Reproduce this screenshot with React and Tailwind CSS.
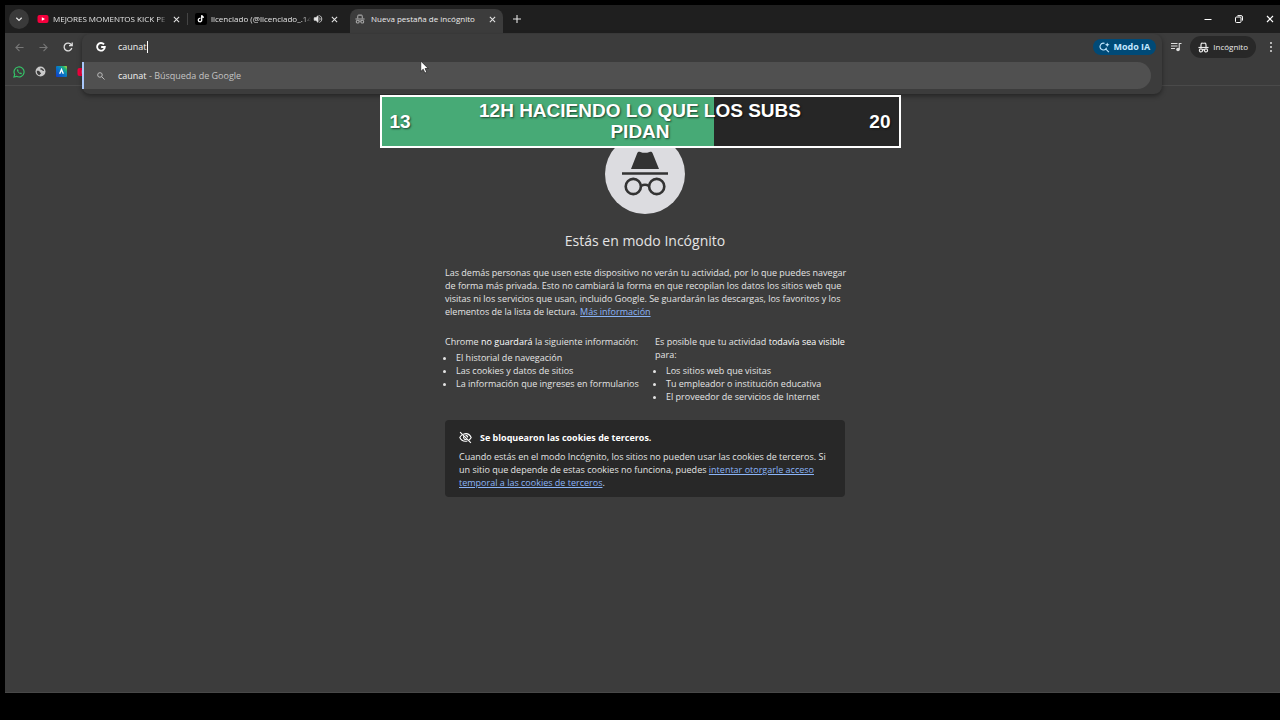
import React, { useState } from "react";

function CloseIcon({ className }) {
  return (
    <svg viewBox="0 0 8 8" className={className} fill="none" stroke="currentColor" strokeWidth="1.2" aria-hidden="true">
      <path d="M1 1l6 6M7 1L1 7" />
    </svg>
  );
}

function IncognitoIcon({ className }) {
  return (
    <svg viewBox="0 0 24 24" className={className} fill="none" stroke="currentColor" strokeWidth="2.6" aria-hidden="true">
      <path d="M6.500 11V6.500C7 2.500 8.500 2 10 2.700h4C15.500 2 17 2.500 17.500 6.500V11" />
      <path d="M1 12h22" />
      <circle cx="6.500" cy="18.300" r="3.400" />
      <circle cx="17.500" cy="18.300" r="3.400" />
      <path d="M9.700 17.500c1.500-1 3.100-1 4.600 0" />
    </svg>
  );
}

function YoutubeIcon({ className }) {
  return (
    <svg viewBox="0 0 12 12" className={className} aria-hidden="true">
      <rect x="0.500" y="2" width="11" height="8" rx="2" fill="#f5003d" />
      <path d="M4.800 4.200L8 6 4.800 7.800z" fill="#fff" />
    </svg>
  );
}

function TiktokIcon({ className }) {
  return (
    <svg viewBox="0 0 12 12" className={className} fill="none" aria-hidden="true">
      <rect width="12" height="12" rx="2" fill="#000" />
      <path d="M5.500 5.400a1.700 1.700 0 1 0 1.200 1.700V2.200c.2 1.300 1 2 2.200 2.100" stroke="#fff" strokeWidth="1.300" />
    </svg>
  );
}

function SpeakerIcon({ className }) {
  return (
    <svg viewBox="0 0 24 24" className={className} fill="none" stroke="currentColor" strokeWidth="2" aria-hidden="true">
      <path d="M3 9v6h4l5 5V4L7 9H3z" fill="currentColor" />
      <path d="M15 8.500c2.500 1.500 2.500 5.500 0 7M15 3.800c8 2 8 14.400 0 16.400" />
    </svg>
  );
}

function MagnifierIcon({ className }) {
  return (
    <svg viewBox="0 0 24 24" className={className} fill="none" stroke="currentColor" strokeWidth="2.200" aria-hidden="true">
      <circle cx="9.500" cy="9.500" r="5.500" />
      <path d="M13.600 13.600L20.500 20.500" />
    </svg>
  );
}

function SparkSearchIcon({ className }) {
  return (
    <svg viewBox="0 0 24 24" className={className} fill="none" stroke="currentColor" strokeWidth="2.400" aria-hidden="true">
      <path d="M12 3A7.300 7.300 0 1 0 16.500 12.500" />
      <path d="M14.500 15L21.500 22" />
      <path d="M18 1l1.400 3.600L23 6l-3.600 1.400L18 11l-1.400-3.600L13 6l3.600-1.400z" fill="currentColor" stroke="none" />
    </svg>
  );
}

function TabTitle({ className, children }) {
  return <span className={"overflow-hidden whitespace-nowrap " + className}>{children}</span>;
}

function TabStrip() {
  return (
    <header className="flex h-7 items-stretch bg-[#1f1f1f] pl-1 text-[8px] text-[#e4e4e4]">
      <button aria-label="Buscar pestañas" className="flex size-5 shrink-0 items-center justify-center self-center rounded-full bg-[#3a3a3a]">
        <svg viewBox="0 0 8 8" className="size-2" fill="none" stroke="currentColor" strokeWidth="1.300" aria-hidden="true">
          <path d="M1.300 2.700L4 5.400l2.700-2.700" />
        </svg>
      </button>
      <nav aria-label="Pestañas" className="flex items-stretch">
        <div className="flex w-[159px] items-center pl-2">
          <YoutubeIcon className="size-3 shrink-0" />
          <TabTitle className="ml-1 w-[114px] [mask-image:linear-gradient(to_right,black_92%,transparent)]">MEJORES MOMENTOS KICK PE</TabTitle>
          <button aria-label="Cerrar pestaña" className="ml-[6px] flex w-2 shrink-0"><CloseIcon className="size-[7px]" /></button>
        </div>
        <div className="flex w-[162px] items-center pl-[7px]">
          <div className="mr-1 -ml-2 h-3 w-px bg-[#444]" />
          <TiktokIcon className="ml-[3px] size-3 shrink-0" />
          <TabTitle className="ml-1 w-[100px] [mask-image:linear-gradient(to_right,black_92%,transparent)]">licenciado (@licenciado_.14</TabTitle>
          <SpeakerIcon className="ml-[2px] size-[10px] shrink-0" />
          <button aria-label="Cerrar pestaña" className="ml-2 flex shrink-0"><CloseIcon className="size-[7px]" /></button>
        </div>
        <div className="mt-1 flex w-[153px] items-center rounded-t-lg bg-[#3c3c3c] pr-[7px] pb-1 pl-[5px]">
          <IncognitoIcon className="size-[10px] shrink-0 text-[#a8a8a8]" />
          <TabTitle className="ml-[6px] flex-1 text-[#ececec]">Nueva pestaña de incógnito</TabTitle>
          <button aria-label="Cerrar pestaña" className="flex shrink-0"><CloseIcon className="size-[7px]" /></button>
        </div>
      </nav>
      <button aria-label="Nueva pestaña" className="ml-[10px] flex items-center">
        <svg viewBox="0 0 8 8" className="size-2" stroke="currentColor" strokeWidth="1.100" aria-hidden="true">
          <path d="M4 0v8M0 4h8" />
        </svg>
      </button>
      <div className="ml-auto flex items-center gap-[23px] pr-[6px] text-white">
        <button aria-label="Minimizar">
          <svg viewBox="0 0 8 8" className="size-2" stroke="currentColor" aria-hidden="true"><path d="M0.500 4.500h7" /></svg>
        </button>
        <button aria-label="Restaurar">
          <svg viewBox="0 0 8 8" className="size-2" fill="none" stroke="currentColor" aria-hidden="true">
            <rect x="0.500" y="2" width="5.500" height="5.500" rx="1" />
            <path d="M2.500 0.600h3.500a1.500 1.500 0 0 1 1.500 1.500v3.500" />
          </svg>
        </button>
        <button aria-label="Cerrar"><CloseIcon className="size-2" /></button>
      </div>
    </header>
  );
}

function Omnibox() {
  const [query, setQuery] = useState("caunat");
  return (
    <div className="relative z-10 ml-2 flex-1">
      <div className="absolute inset-x-0 top-0 rounded-lg bg-[#3c3c3c] pt-7 pr-[11px] pb-[5px] shadow-[0_2px_5px_rgba(0,0,0,0.4)]">
        <button className="flex h-[27px] w-full items-center rounded-r-full border-l-2 border-[#a8c7fa] bg-[#505050] pl-3 text-left text-[#c4c4c4]">
          <MagnifierIcon className="size-[10px]" />
          <span className="ml-3"><span className="text-[#f2f2f2]">{query}</span> - Búsqueda de Google</span>
        </button>
      </div>
      <div className="relative flex h-[26px] items-center pr-[6px] pl-[14px]">
        <svg viewBox="0 0 12 12" className="size-[10px]" fill="none" stroke="#fff" strokeWidth="2.200" aria-hidden="true">
          <path d="M9.600 2.900A4.600 4.600 0 1 0 10.600 6H6.200" />
        </svg>
        <label className="ml-3 flex flex-1 items-center">
          <span className="sr-only">Buscar o escribir URL</span>
          <input value={query} onChange={(e) => setQuery(e.target.value)} className="bg-transparent text-[#f2f2f2] outline-none [field-sizing:content]" />
          <span className="h-3 w-px bg-white" />
        </label>
        <button className="flex h-4 items-center gap-[3px] rounded-full bg-[#004a77] px-[6px] font-bold text-[#c2e7ff]">
          <SparkSearchIcon className="size-[11px]" />
          Modo IA
        </button>
      </div>
    </div>
  );
}

function Toolbar() {
  return (
    <div className="flex h-[29px] items-start bg-[#3c3c3c] pt-px text-[#dedede]">
      <div className="flex h-[26px] w-[69px] items-center justify-between pr-[1px] pl-[10px]">
        <button aria-label="Atrás" className="text-[#777]">
          <svg viewBox="0 0 10 10" className="size-[9px]" fill="none" stroke="currentColor" strokeWidth="1.200" aria-hidden="true"><path d="M9.500 5H1M5 1L1 5l4 4" /></svg>
        </button>
        <button aria-label="Adelante" className="text-[#777]">
          <svg viewBox="0 0 10 10" className="size-[9px]" fill="none" stroke="currentColor" strokeWidth="1.200" aria-hidden="true"><path d="M0.500 5H9M5 1l4 4-4 4" /></svg>
        </button>
        <button aria-label="Volver a cargar">
          <svg viewBox="0 0 10 10" className="size-[10px]" fill="none" stroke="currentColor" strokeWidth="1.300" aria-hidden="true"><path d="M8.800 6A3.900 3.900 0 1 1 8.300 2.800L9 3.600M9.200 0.500v3.200H6" /></svg>
        </button>
      </div>
      <Omnibox />
      <div className="flex h-[26px] items-center pr-[7px] pl-2">
        <button aria-label="Controlar contenido multimedia">
          <svg viewBox="0 0 24 24" className="size-3" fill="none" stroke="currentColor" strokeWidth="2.200" aria-hidden="true">
            <path d="M2 5h13M2 10h13M2 15h8M18.500 17V5H23" />
            <circle cx="16" cy="17" r="2.500" fill="currentColor" />
          </svg>
        </button>
        <button className="ml-2 flex h-[22px] items-center gap-1 rounded-full bg-[#282828] px-2 text-[8px] text-[#ececec]">
          <IncognitoIcon className="size-[11px]" />
          Incógnito
        </button>
        <button aria-label="Menú" className="ml-[13px]">
          <svg viewBox="0 0 4 12" className="h-3 w-1" fill="currentColor" aria-hidden="true">
            <circle cx="2" cy="2" r="1" /><circle cx="2" cy="6" r="1" /><circle cx="2" cy="10" r="1" />
          </svg>
        </button>
      </div>
    </div>
  );
}

function BookmarksBar() {
  return (
    <nav aria-label="Marcadores" className="flex h-6 items-center gap-[10px] border-b border-[#4a4a4a] bg-[#3c3c3c] pb-1 pl-2">
      <a href="#whatsapp" aria-label="WhatsApp">
        <svg viewBox="0 0 12 12" className="size-3" fill="none" stroke="#35c368" aria-hidden="true">
          <path d="M1 11l.7-2.600A5 5 0 1 1 3.600 10.300z" strokeWidth="1.200" />
          <path d="M4 3.500c-.8 1.500 2.500 5.200 4.500 4.700l.4-1.100-1.300-.7-.7.500C5.900 6.400 5.400 5.800 5.200 5.100l.4-.6-.6-1.200z" fill="#35c368" stroke="none" />
        </svg>
      </a>
      <a href="#web" aria-label="Sitio web">
        <svg viewBox="0 0 12 12" className="size-[11px]" aria-hidden="true">
          <circle cx="6" cy="6" r="5.400" fill="#c9c9c9" />
          <path d="M2 5.400c1.500-.3 3 .2 3.400 1.200.3.800 1.200.6 1.200 1.400 0 1-1.400.8-1.600 2.200C3 9.600 1.700 7.800 2 5.400zM6 2.200c1.700 0 3.400 1 3.900 3-.9.500-1.700.2-2-.5-.4-.7-1.900-.3-1.900-1.200z" fill="#3c3c3c" />
        </svg>
      </a>
      <a href="#app" aria-label="Aplicación">
        <svg viewBox="0 0 12 12" className="size-[11px]" aria-hidden="true">
          <defs>
            <linearGradient id="tile" x1="0" y1="1" x2="1" y2="0">
              <stop offset="0" stopColor="#1238c8" /><stop offset=".55" stopColor="#087fc4" /><stop offset=".8" stopColor="#22b573" /><stop offset="1" stopColor="#d4dd32" />
            </linearGradient>
          </defs>
          <rect width="12" height="12" rx="1" fill="url(#tile)" />
          <path d="M4 8.500L6 3.800l2 4.700" fill="none" stroke="#fff" strokeWidth="1.500" />
        </svg>
      </a>
      <a href="#youtube" aria-label="YouTube"><YoutubeIcon className="size-3" /></a>
    </nav>
  );
}

function GoalBanner() {
  return (
    <section aria-label="Meta de suscriptores" className="absolute inset-x-0 top-[95px] z-20 mx-auto flex w-[521px] items-center justify-between border-2 border-white bg-[linear-gradient(to_right,#47aa76_64.3%,#262626_64.3%)] px-2 pt-[3px] pb-1 font-['Liberation_Sans',Arial,sans-serif] text-[19px] leading-[21px] font-bold text-white [text-shadow:1px_1px_2px_rgba(0,0,0,0.6)]">
      <span>13</span>
      <h2 className="w-[340px] text-center">12H HACIENDO LO QUE LOS SUBS PIDAN</h2>
      <span>20</span>
    </section>
  );
}

function IncognitoPage() {
  return (
    <main className="flex-1 border-b border-[#484848] bg-[#3c3c3c] pt-12 pl-[5px] leading-[13px] text-[#e4e4e4]">
      <div className="mx-auto w-full max-w-[400px]">
        <svg viewBox="0 0 80 80" className="mx-auto size-20" role="img" aria-label="Incógnito">
          <circle cx="40" cy="40" r="40" fill="#dcdce0" />
          <path d="M26 35l6.300-16c.6-1.300 1.600-1.600 3-1.100 3 1.200 6.200 1.200 9.200 0 1.400-.5 2.400-.2 3 1.100L54 35z" fill="#333" />
          <path d="M17 39.500h46" stroke="#333" strokeWidth="2.600" />
          <g fill="none" stroke="#333" strokeWidth="2.600">
            <circle cx="28.300" cy="52.500" r="7.600" /><circle cx="51.700" cy="52.500" r="7.600" />
            <path d="M36 52c2.500-1.500 5.500-1.500 8 0" />
          </g>
        </svg>
        <h1 className="mt-4 text-center text-[14px] leading-[22px]">Estás en modo Incógnito</h1>
        <p className="mt-[14px] -mr-2">
          Las demás personas que usen este dispositivo no verán tu actividad, por lo que puedes navegar de forma más privada. Esto no cambiará la forma en que recopilan los datos los sitios web que visitas ni los servicios que usan, incluido Google. Se guardarán las descargas, los favoritos y los elementos de la lista de lectura.{" "}
          <a href="#info" className="text-[#8ab4f8] underline">Más información</a>
        </p>
        <div className="mt-[17px] grid grid-cols-2 gap-5">
          <section>
            <p className="whitespace-nowrap">Chrome <em className="font-medium text-white not-italic">no guardará</em> la siguiente información:</p>
            <ul className="mt-[3px] list-disc pl-[11px] whitespace-nowrap">
              <li>El historial de navegación</li>
              <li>Las cookies y datos de sitios</li>
              <li>La información que ingreses en formularios</li>
            </ul>
          </section>
          <section>
            <p><span className="whitespace-nowrap">Es posible que tu actividad <em className="font-medium text-white not-italic">todavía sea visible</em></span> para:</p>
            <ul className="mt-[3px] list-disc pl-[11px]">
              <li>Los sitios web que visitas</li>
              <li>Tu empleador o institución educativa</li>
              <li>El proveedor de servicios de Internet</li>
            </ul>
          </section>
        </div>
        <section className="mt-[17px] rounded-sm bg-[#282828] px-[14px] pt-[11px] pb-2">
          <h2 className="flex items-center gap-2 font-bold text-white">
            <svg viewBox="0 0 24 24" className="size-[13px]" fill="none" stroke="currentColor" strokeWidth="2" aria-hidden="true">
              <path d="M8 6c6-2.500 11.500 0 14.500 6-1 2-2.300 3.600-4 4.800M15.500 18.500C9 20 4 17.500 1.500 12c1-2 2.300-3.600 4-4.800M9 9.500a4 4 0 0 0 5.500 5.500M12 8a4 4 0 0 1 4 4M2 2l20 20" />
            </svg>
            Se bloquearon las cookies de terceros.
          </h2>
          <p className="mt-[6px]">
            Cuando estás en el modo Incógnito, los sitios no pueden usar las cookies de terceros. Si un sitio que depende de estas cookies no funciona, puedes{" "}
            <a href="#permitir" className="text-[#8ab4f8] underline">intentar otorgarle acceso temporal a las cookies de terceros</a>.
          </p>
        </section>
      </div>
    </main>
  );
}

export default function App() {
  return (
    <div className="relative flex min-h-screen flex-col overflow-hidden bg-black pt-[5px] pb-[27px] pl-[5px] font-['Open_Sans','Noto_Sans',sans-serif] text-[9px]">
      <TabStrip />
      <Toolbar />
      <BookmarksBar />
      <IncognitoPage />
      <GoalBanner />
      <svg viewBox="0 0 12 18" className="absolute top-[60px] left-[420px] z-30 h-[14px] w-[9px]" aria-hidden="true">
        <path d="M1 1v14l3.300-3L6.500 17l2.500-1-2.200-5H11z" fill="#fff" stroke="#222" strokeWidth="1" />
      </svg>
    </div>
  );
}
